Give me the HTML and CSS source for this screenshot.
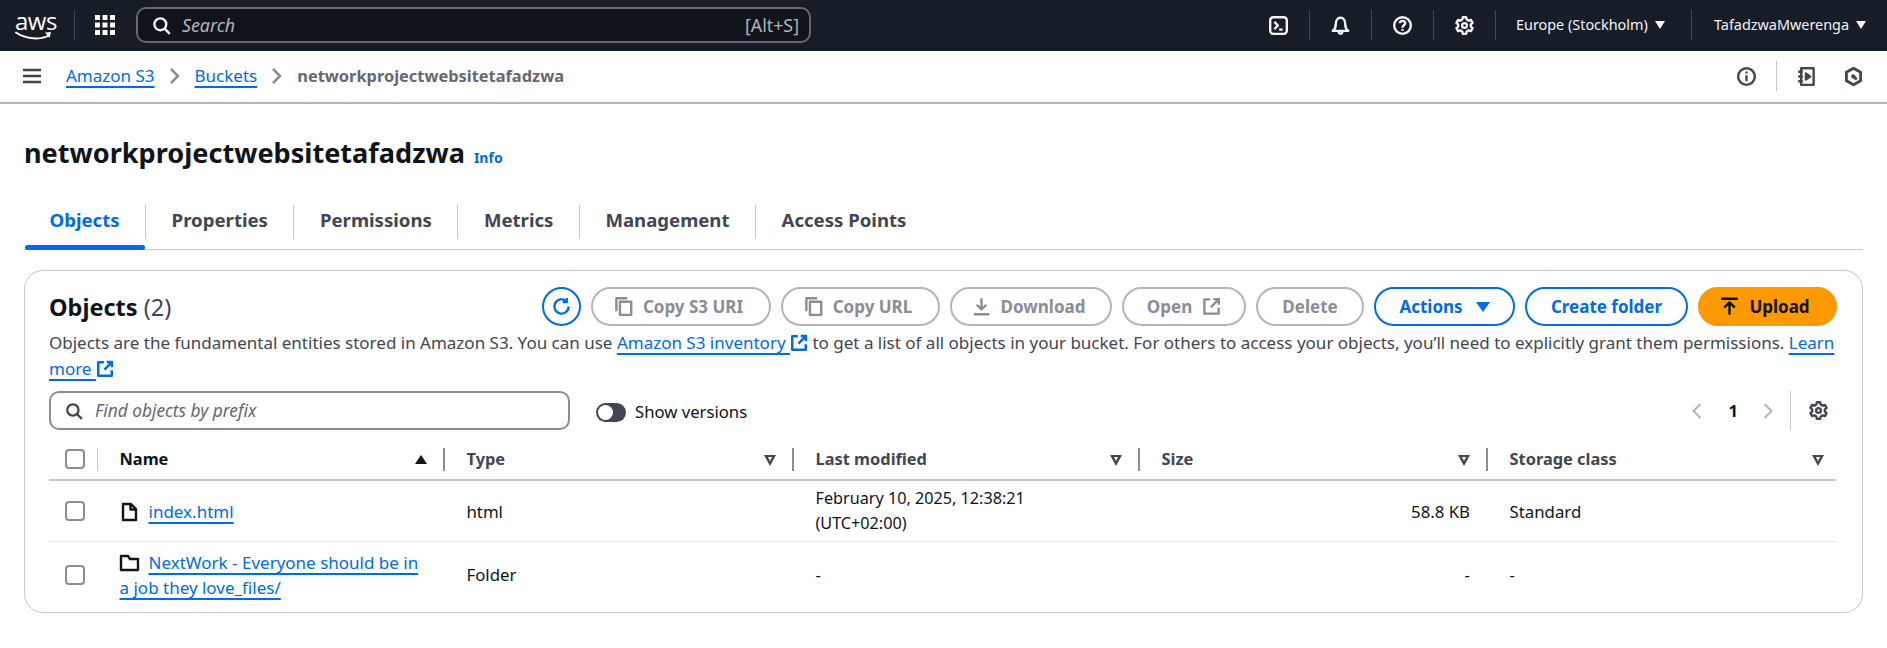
FILE: index.html
```html
<!DOCTYPE html>
<html lang="en">
<head>
    <meta charset="UTF-8">
    <title>networkprojectwebsitetafadzwa - S3 bucket</title>
    <link rel="stylesheet" href="styles.css">
</head>
<body>
    <svg class="sprites" width="0" height="0">
        <symbol id="i-search" viewBox="0 0 16 16"><circle cx="7" cy="7" r="5"/><path d="M10.6 10.6 15 15"/></symbol>
        <symbol id="i-gear" viewBox="0 0 16 16"><path d="M6.6 1h2.800l.5 2 1.500.9 2-.6 1.400 2.400-1.500 1.400v1.800l1.500 1.400-1.400 2.400-2-.6-1.500.9-.5 2H6.600l-.5-2-1.500-.9-2 .6-1.400-2.400 1.500-1.400V7.100L1.200 5.700l1.400-2.400 2 .6 1.500-.9z"/><circle cx="8" cy="8" r="2"/></symbol>
        <symbol id="i-copy" viewBox="0 0 16 16"><path d="M11 1H2v11"/><rect x="5" y="4" width="9.500" height="11"/></symbol>
        <symbol id="i-ext" viewBox="0 0 16 16"><path d="M7 2H2v12h12V9"/><path d="M9.500 1.800h4.700v4.700M14 2 7.500 8.500"/></symbol>
    </svg>

    <header class="topbar">
        <a class="logo">
            <span class="logo-text">aws</span>
            <svg class="logo-smile" viewBox="0 0 38 10"><path d="M1 1.500c10 7 25 7.500 33 3" fill="none" stroke="#fff" stroke-width="2" stroke-linecap="round"/><path d="M30 1.500l6-.5-1.500 6" fill="#fff"/></svg>
        </a>
        <span class="topbar-sep logo-sep"></span>
        <svg class="apps" viewBox="0 0 20 20"><path d="M0 0h5v5H0zM7.500 0h5v5h-5zM15 0h5v5h-5zM0 7.500h5v5H0zM7.500 7.500h5v5h-5zM15 7.500h5v5h-5zM0 15h5v5H0zM7.500 15h5v5h-5zM15 15h5v5h-5z" fill="#fff"/></svg>
        <div class="global-search">
            <svg class="icon icon-light icon-20"><use href="#i-search"/></svg>
            <span class="global-search-text">Search</span>
            <span class="shortcut">[Alt+S]</span>
        </div>
        <div class="topbar-right">
            <span class="top-btn"><svg class="icon icon-light icon-20" viewBox="0 0 16 16"><rect x="1" y="1" width="14" height="14" rx="2.500"/><path d="M4.500 5l3 3-3 3M8.500 11.500h3"/></svg></span>
            <span class="top-btn"><svg class="icon icon-light icon-20" viewBox="0 0 16 16"><path d="M1.500 12.500h13c-1.500-1-2.500-2-2.500-5.500 0-3-1.500-5.500-4-5.500S4 4 4 7c0 3.500-1 4.500-2.500 5.500zM6.500 13c0 2.500 3 2.500 3 0"/></svg></span>
            <span class="top-btn"><svg class="icon icon-light icon-20" viewBox="0 0 16 16"><circle cx="8" cy="8" r="7"/><path d="M5.800 6.200C5.800 3.500 10.300 3.500 10.300 6c0 1.800-2.300 1.800-2.300 3.800M8 11v1.500"/></svg></span>
            <span class="top-btn"><svg class="icon icon-light icon-20"><use href="#i-gear"/></svg></span>
            <span class="top-menu region">Europe (Stockholm) <i class="caret caret-light"></i></span>
            <span class="top-menu user">TafadzwaMwerenga <i class="caret caret-light"></i></span>
        </div>
    </header>

    <nav class="crumbbar">
        <svg class="icon icon-dark menu-icon" viewBox="0 0 18 16"><path d="M0 2h18M0 8h18M0 14h18"/></svg>
        <a class="link">Amazon S3</a>
        <svg class="crumb-arrow" viewBox="0 0 10 16"><path d="M1 1l7 7-7 7"/></svg>
        <a class="link">Buckets</a>
        <svg class="crumb-arrow" viewBox="0 0 10 16"><path d="M1 1l7 7-7 7"/></svg>
        <span class="crumb-current">networkprojectwebsitetafadzwa</span>
        <div class="crumb-tools">
            <svg class="icon icon-dark icon-20" viewBox="0 0 16 16"><circle cx="8" cy="8" r="7"/><path d="M8 7v5M8 3.800v1.700"/></svg>
            <span class="crumb-sep"></span>
            <svg class="icon icon-dark icon-20" viewBox="0 0 16 16"><path d="M3.500 1h10.500v14H3.500zM1 4h4M1 8h4M1 12h4"/><path d="M7.500 5.500 11 8l-3.500 2.500z" fill="#424650"/></svg>
            <svg class="icon icon-dark icon-20 last-tool" viewBox="0 0 16 16"><path d="M8 1l6 3.500v7L8 15l-6-3.500v-7z" stroke-width="2.400"/><path d="M10.800 10.500 8.500 8.800" stroke-width="2.400"/><circle cx="7.800" cy="7.800" r="1.800" fill="#424650" stroke="none"/></svg>
        </div>
    </nav>

    <main class="page">
        <div class="title-row">
            <h1>networkprojectwebsitetafadzwa</h1>
            <a class="info">Info</a>
        </div>

        <div class="tabs">
            <span class="tab tab-active">Objects</span>
            <span class="tab">Properties</span>
            <span class="tab">Permissions</span>
            <span class="tab">Metrics</span>
            <span class="tab">Management</span>
            <span class="tab tab-last">Access Points</span>
        </div>

        <section class="card">
            <div class="card-head">
                <h2>Objects <span class="count">(2)</span></h2>
                <div class="actions">
                    <button class="btn-round"><svg class="icon icon-blue icon-20" viewBox="0 0 16 16"><path d="M14 8a6 6 0 1 1-2-4.500"/><path d="M12.500 .8v3.400H9"/></svg></button>
                    <button class="btn btn-off btn-icon w-s3"><svg class="icon icon-off"><use href="#i-copy"/></svg>Copy S3 URI</button>
                    <button class="btn btn-off btn-icon w-url"><svg class="icon icon-off"><use href="#i-copy"/></svg>Copy URL</button>
                    <button class="btn btn-off btn-icon w-dl"><svg class="icon icon-off" viewBox="0 0 16 16"><path d="M8 1v9M4 6.500 8 10.500l4-4M1.500 14.500h13"/></svg>Download</button>
                    <button class="btn btn-off w-open">Open<svg class="icon icon-off"><use href="#i-ext"/></svg></button>
                    <button class="btn btn-off w-del">Delete</button>
                    <button class="btn btn-blue w-act">Actions <i class="caret caret-blue"></i></button>
                    <button class="btn btn-blue w-new">Create folder</button>
                    <button class="btn btn-upload btn-icon w-up"><svg class="icon icon-black" viewBox="0 0 16 16"><path d="M1 1.500h14M8 15V5M3.500 9 8 4.500 12.500 9"/></svg>Upload</button>
                </div>
            </div>
            <p class="desc">Objects are the fundamental entities stored in Amazon S3. You can use <a class="link">Amazon S3 inventory </a><svg class="icon icon-blue ext"><use href="#i-ext"/></svg> to get a list of all objects in your bucket. For others to access your objects, you’ll need to explicitly grant them permissions. <a class="link">Learn</a> <a class="link">more </a><svg class="icon icon-blue ext"><use href="#i-ext"/></svg></p>

            <div class="filter-row">
                <div class="filter">
                    <svg class="icon icon-dark icon-18"><use href="#i-search"/></svg>
                    <span>Find objects by prefix</span>
                </div>
                <span class="toggle"></span>
                <span class="toggle-label">Show versions</span>
                <div class="pager">
                    <svg class="pager-arrow" viewBox="0 0 10 16"><path d="M8 1 1 8l7 7"/></svg>
                    <b>1</b>
                    <svg class="pager-arrow" viewBox="0 0 10 16"><path d="M2 1l7 7-7 7"/></svg>
                    <span class="pager-sep"></span>
                    <svg class="icon icon-dark icon-20"><use href="#i-gear"/></svg>
                </div>
            </div>

            <table>
                <thead>
                    <tr>
                        <th class="col-check"><span class="check"></span><i class="th-sep th-sep-light"></i></th>
                        <th class="col-name th-sorted">Name<i class="sort-up"></i><i class="th-sep"></i></th>
                        <th class="col-type">Type<i class="sort-down"></i><i class="th-sep"></i></th>
                        <th class="col-date">Last modified<i class="sort-down"></i><i class="th-sep"></i></th>
                        <th class="col-size">Size<i class="sort-down"></i><i class="th-sep"></i></th>
                        <th class="col-class">Storage class<i class="sort-down"></i></th>
                    </tr>
                </thead>
                <tbody>
                    <tr>
                        <td><span class="check"></span></td>
                        <td class="cell-name"><svg class="icon icon-black file-icon" viewBox="0 0 19 18"><path d="M3 1h8l5 5v11H3zM10.500 1v5.500H16"/></svg><a class="link">index.html</a></td>
                        <td>html</td>
                        <td class="cell-date">February 10, 2025, 12:38:21<br>(UTC+02:00)</td>
                        <td class="num">58.8 KB</td>
                        <td>Standard</td>
                    </tr>
                    <tr>
                        <td><span class="check"></span></td>
                        <td class="cell-name"><svg class="icon icon-black file-icon" viewBox="0 0 19 18"><path d="M1 2h7l2 3h8v11H1z"/></svg><a class="link">NextWork - Everyone should be in a job they love_files/</a></td>
                        <td>Folder</td>
                        <td>-</td>
                        <td class="num">-</td>
                        <td>-</td>
                    </tr>
                </tbody>
            </table>
        </section>
    </main>
</body>
</html>
```

FILE: styles.css
```css
* {
    box-sizing: border-box;
}
body {
    margin: 0;
    font-family: 'Noto Sans', Arial, sans-serif;
    font-size: 17px;
    line-height: 24px;
    color: #0f141a;
    background: #fff;
}
.sprites {
    display: none;
}
.icon {
    fill: none;
    stroke-width: 2;
    stroke-linejoin: round;
    flex: none;
    width: 19px;
    height: 19px;
    overflow: visible;
}
.icon-20 { width: 19px; height: 19px; }
.icon-18 { width: 18px; height: 18px; }
.icon-light { stroke: #f3f3f7; }
.icon-dark { stroke: #424650; }
.icon-blue { stroke: #006ce0; }
.icon-off { stroke: #8c8c94; }
.icon-black { stroke: #0f141a; }
.link {
    color: #006ce0;
    text-decoration: underline;
    text-decoration-thickness: 1.500px;
    text-underline-offset: 4px;
}

/* top bar */
.topbar {
    height: 51px;
    padding-bottom: 1px;
    background: #161d26;
    display: flex;
    align-items: center;
    color: #f3f3f7;
}
.logo {
    width: 38px;
    margin-left: 15px;
    height: 30px;
    position: relative;
    display: block;
}
.logo-text {
    display: block;
    font-family: 'Open Sans', sans-serif;
    font-size: 24px;
    line-height: 22px;
    letter-spacing: -.5px;
    color: #fff;
}
.logo-smile {
    display: block;
    width: 38px;
    height: 10px;
    margin-top: -1px;
}
.topbar-sep {
    width: 1px;
    height: 30px;
    background: #424650;
}
.logo-sep {
    margin-left: 21px;
}
.apps {
    width: 20px;
    height: 20px;
    margin-left: 20px;
}
.global-search {
    width: 675px;
    height: 36px;
    margin-left: 21px;
    background: #0f141a;
    border: 2px solid #656871;
    border-radius: 10px;
    display: flex;
    align-items: center;
    padding: 0 10px 0 14px;
    gap: 11px;
    color: #b4b4bb;
    font-size: 17.800px;
}
.global-search-text {
    font-style: italic;
}
.shortcut {
    margin-left: auto;
}
.topbar-right {
    margin-left: auto;
    display: flex;
    align-items: center;
    height: 100%;
}
.top-btn {
    width: 62px;
    height: 30px;
    display: flex;
    align-items: center;
    justify-content: center;
    border-right: 1px solid #424650;
}
.top-menu {
    height: 30px;
    display: flex;
    align-items: center;
    gap: 7px;
    white-space: nowrap;
    font-size: 14.400px;
}
.region {
    width: 196px;
    padding-left: 20px;
    border-right: 1px solid #424650;
}
.user {
    width: 195px;
    padding-left: 22px;
}
.caret {
    display: inline-block;
    border-left: 5.500px solid transparent;
    border-right: 5.500px solid transparent;
}
.caret-light { border-top: 8px solid #f3f3f7; }
.caret-blue { border-top: 10px solid #006ce0; border-left-width: 7px; border-right-width: 7px; margin-left: 3px; }

/* breadcrumbs */
.crumbbar {
    height: 53px;
    padding: 0 0 1px 23px;
    display: flex;
    align-items: center;
    border-bottom: 2px solid #b4b4bb;
}
.menu-icon {
    width: 18px;
    height: 16px;
    stroke-width: 2.500;
    margin-right: 25px;
}
.crumb-arrow {
    width: 10px;
    height: 16px;
    margin: 0 15px 0 15px;
    fill: none;
    stroke: #8c8c94;
    stroke-width: 2.500;
}
.crumb-current {
    color: #656871;
    font-size: 16.400px;
    font-weight: 700;
}
.crumb-tools {
    margin-left: auto;
    height: 100%;
    display: flex;
    align-items: center;
}
.crumb-sep {
    width: 1px;
    height: 30px;
    background: #c6c6cd;
    margin: 0 20px;
}
.last-tool {
    margin: 0 24px 0 28px;
}

/* page */
.page {
    padding: 0 24px;
}
.title-row {
    display: flex;
    align-items: baseline;
    height: 101px;
    padding-top: 31px;
    gap: 9px;
}
h1 {
    margin: 0;
    font-size: 27.100px;
    line-height: 36px;
    font-weight: 700;
}
.info {
    color: #006ce0;
    font-size: 14px;
    font-weight: 700;
}
.tabs {
    height: 45px;
    display: flex;
    border-bottom: 1px solid #c6c6cd;
    position: relative;
}
.tab {
    height: 34px;
    padding: 0 25.500px;
    border-right: 1px solid #c6c6cd;
    font-size: 18.600px;
    font-weight: 700;
    line-height: 30px;
    color: #424650;
    white-space: nowrap;
}
.tab-last {
    border-right: 0;
}
.tab-active {
    color: #006ce0;
    position: relative;
}
.tab-active::after {
    content: "";
    position: absolute;
    left: 1px;
    right: 0;
    top: 40px;
    height: 5px;
    background: #006ce0;
    border-radius: 3px;
}

/* card */
.card {
    margin-top: 20px;
    height: 343px;
    border: 1px solid #c6c6cd;
    border-radius: 19px;
    padding: 16px 25px 0 24px;
}
.card-head {
    display: flex;
    align-items: center;
    justify-content: space-between;
    height: 39px;
}
h2 {
    margin: 0;
    font-size: 23.500px;
    font-weight: 700;
    line-height: 30px;
}
.count {
    font-weight: 400;
    color: #424650;
}
.actions {
    display: flex;
    gap: 10px;
}
button {
    font-family: inherit;
    font-size: 17px;
    font-weight: 700;
    height: 39px;
    border-radius: 20px;
    background: #fff;
    border: 2px solid;
    display: flex;
    align-items: center;
    justify-content: center;
    gap: 10px;
    padding: 0;
    white-space: nowrap;
}
.btn-icon {
    padding-right: 5px;
}
.btn-round {
    width: 39px;
    border-color: #006ce0;
}
.btn-off {
    border-color: #b4b4bb;
    color: #8c8c94;
}
.btn-blue {
    border-color: #006ce0;
    color: #006ce0;
}
.btn-upload {
    border-color: #ff9900;
    background: #ff9900;
    color: #0f141a;
}
.w-s3 { width: 180px; }
.w-url { width: 159px; }
.w-dl { width: 162px; }
.w-open { width: 124px; }
.w-del { width: 108px; }
.w-act { width: 141px; }
.w-new { width: 163px; }
.w-up { width: 139px; }
.desc {
    margin: 4px 0 0;
    line-height: 26px;
    color: #424650;
}
.ext {
    width: 18px;
    height: 18px;
    stroke-width: 2.200;
    vertical-align: -3px;
}
.filter-row {
    display: flex;
    align-items: center;
    margin-top: 9px;
    height: 39px;
    font-size: 16.700px;
}
.filter {
    width: 521px;
    height: 39px;
    border: 2px solid #8c8c94;
    border-radius: 10px;
    display: flex;
    align-items: center;
    gap: 12px;
    padding-left: 14px;
    font-style: italic;
    font-size: 17.300px;
    color: #656871;
}
.toggle {
    width: 30px;
    height: 19px;
    border-radius: 10px;
    background: #424650;
    margin: 3px 0 0 26px;
    position: relative;
}
.toggle::after {
    content: "";
    position: absolute;
    left: 2px;
    top: 2px;
    width: 15px;
    height: 15px;
    border-radius: 50%;
    background: #fff;
}
.toggle-label {
    margin: 3px 0 0 9px;
}
.pager {
    margin-left: auto;
    display: flex;
    align-items: center;
    height: 39px;
    margin-right: 9px;
}
.pager b {
    margin: 0 24px 0 25px;
}
.pager-arrow {
    width: 11px;
    height: 16px;
    fill: none;
    stroke: #b4b4bb;
    stroke-width: 2;
}
.pager-sep {
    width: 1px;
    height: 39px;
    background: #c6c6cd;
    margin: 0 18px 0 17px;
}

/* table */
table {
    width: 1787px;
    margin-top: 9px;
    border-collapse: collapse;
    table-layout: fixed;
}
th {
    position: relative;
    height: 41px;
    padding: 0 0 0 21.500px;
    text-align: left;
    font-size: 16.400px;
    color: #424650;
    border-bottom: 2px solid #c6c6cd;
}
th.col-check, td:first-child {
    padding-left: 16px;
}
.col-check { width: 49px; }
.col-name { width: 347px; }
.col-type { width: 349px; }
.col-date { width: 346px; }
.col-size { width: 348px; }
.th-sorted {
    color: #0f141a;
}
td {
    padding: 5px 18px 5px 21.500px;
    vertical-align: middle;
    border-bottom: 1px solid #e8e8ec;
    font-size: 16.800px;
    line-height: 25px;
}
tbody tr:first-child td {
    height: 60px;
}
tbody tr:last-child td {
    height: 66px;
    border-bottom: 0;
}
td.cell-name {
    padding-right: 20px;
    font-size: 17px;
}
td.cell-date {
    font-size: 16.200px;
}
td.num {
    text-align: right;
}
.check {
    display: block;
    width: 20px;
    height: 20px;
    border: 2px solid #8c8c94;
    border-radius: 4px;
}
.file-icon {
    width: 19px;
    height: 18px;
    stroke-width: 2.400;
    vertical-align: -3px;
    margin-right: 10px;
}
.th-sep {
    position: absolute;
    right: 0;
    top: 9px;
    height: 23px;
    width: 1px;
    border-right: 2px solid #8c8c94;
}
.th-sep-light {
    border-right: 1px solid #c6c6cd;
}
.sort-up, .sort-down {
    position: absolute;
    right: 18px;
    top: 16px;
}
.col-class .sort-down {
    right: 12px;
}
.sort-up {
    border-left: 6px solid transparent;
    border-right: 6px solid transparent;
    border-bottom: 9px solid #0f141a;
}
.sort-down {
    width: 0;
    height: 0;
    border-left: 6px solid transparent;
    border-right: 6px solid transparent;
    border-top: 11px solid #424650;
}
.sort-down::after {
    content: "";
    position: absolute;
    left: -2.500px;
    top: -9px;
    border-left: 2.500px solid transparent;
    border-right: 2.500px solid transparent;
    border-top: 4px solid #fff;
}
```
